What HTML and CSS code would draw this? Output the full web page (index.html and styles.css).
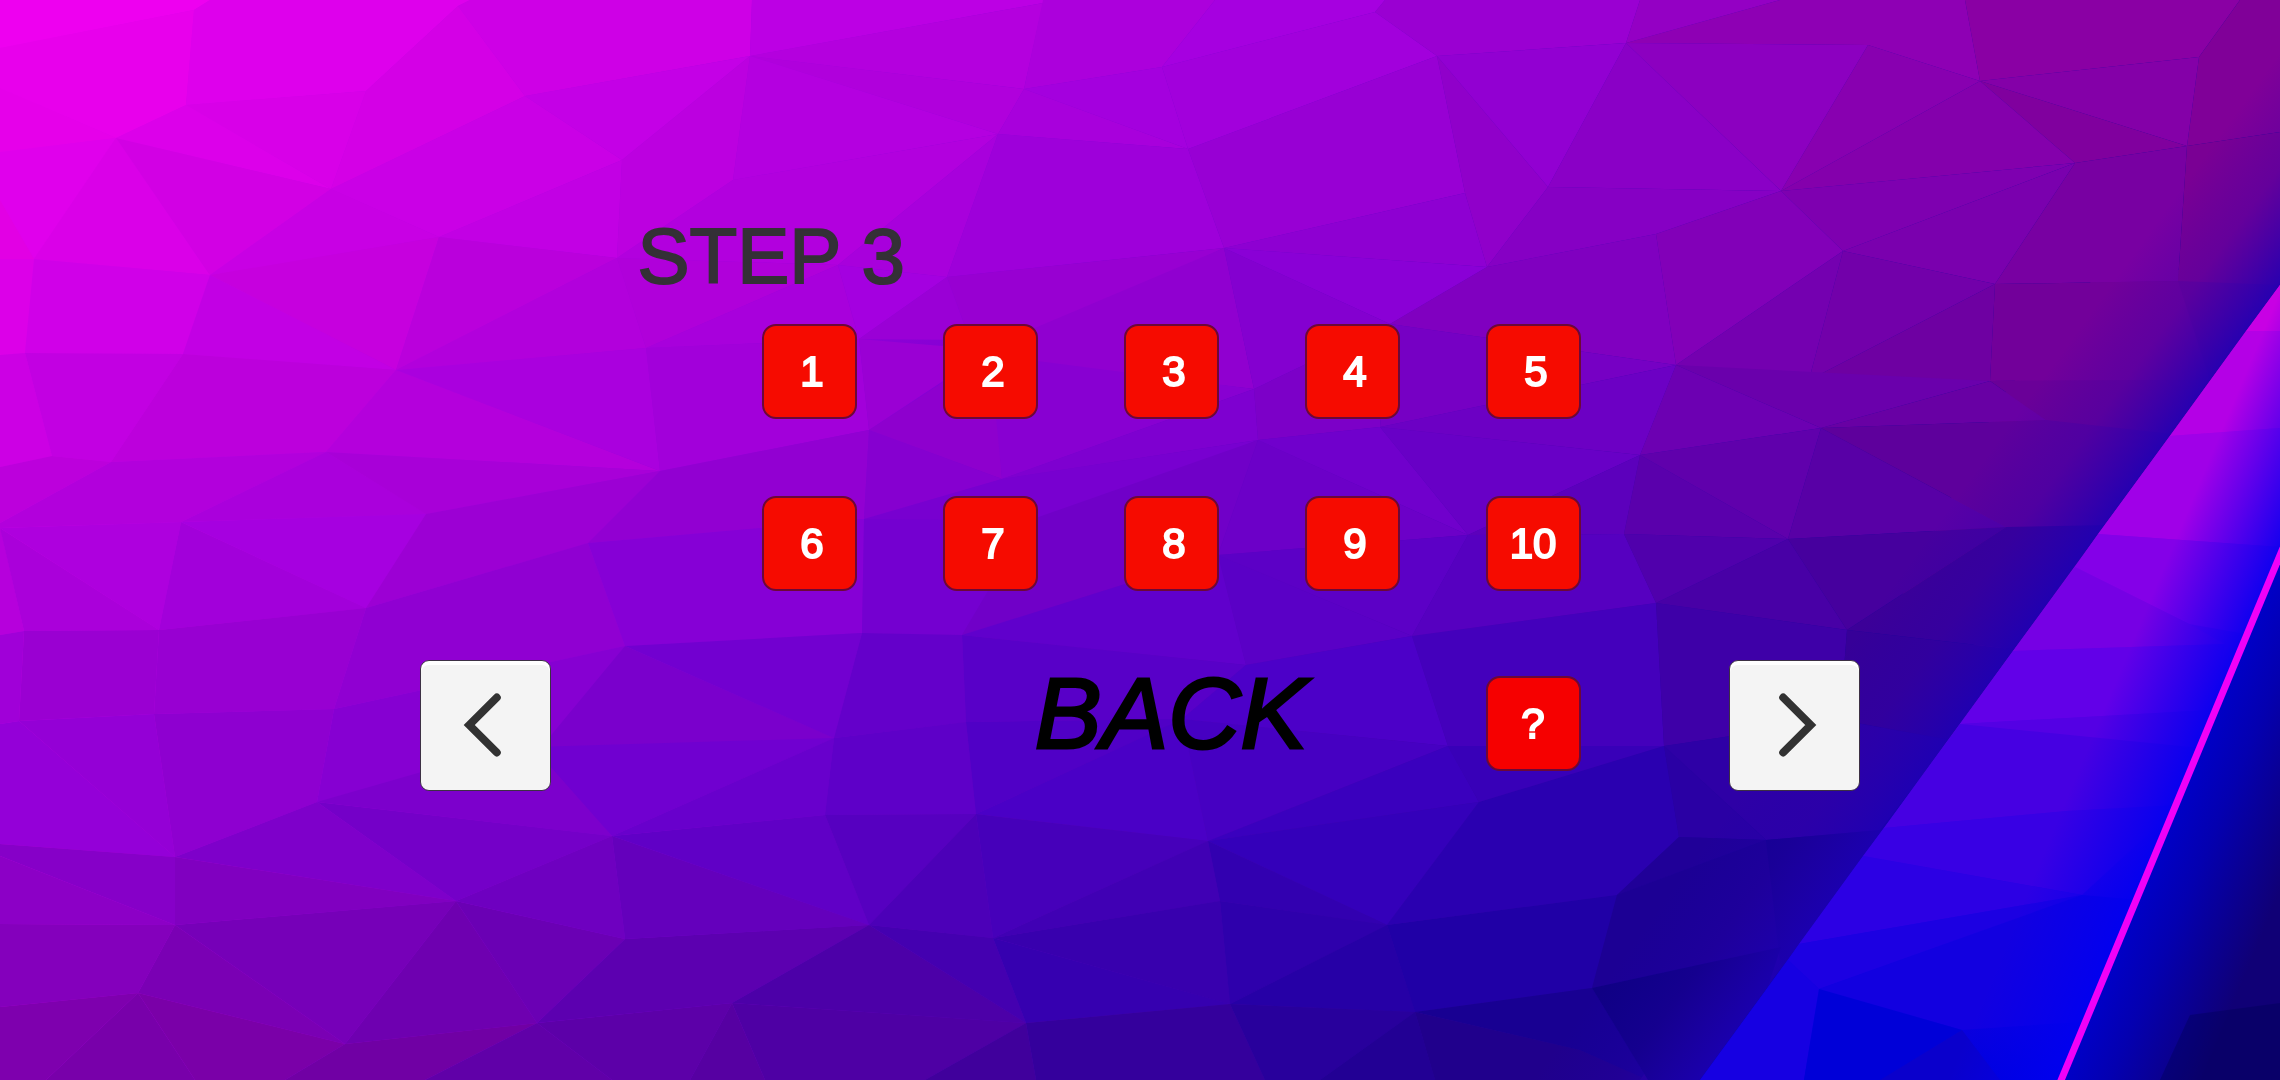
FILE: index.html
```html
<!DOCTYPE html>
<html lang="en">
<head>
    <meta charset="UTF-8">
    <meta name="viewport" content="width=device-width, initial-scale=1.0">
    <title>Step 3</title>
    <link rel="stylesheet" href="styles.css">
</head>
<body>
    <svg class="backdrop" viewBox="0 0 2280 1080" preserveAspectRatio="xMidYMid slice" aria-hidden="true">
        <defs>
            <linearGradient id="base" x1="0" y1="0" x2="1700" y2="1080" gradientUnits="userSpaceOnUse">
                <stop offset="0" stop-color="#ee00f0"/>
                <stop offset="0.5" stop-color="#8400d4"/>
                <stop offset="1" stop-color="#120094"/>
            </linearGradient>
            <linearGradient id="shade" x1="1880" y1="602" x2="1990" y2="682" gradientUnits="userSpaceOnUse">
                <stop offset="0" stop-color="#1400b4" stop-opacity="0"/>
                <stop offset="0.5" stop-color="#2400b0" stop-opacity="0.25"/>
                <stop offset="1" stop-color="#1c00b4" stop-opacity="0.85"/>
            </linearGradient>
            <linearGradient id="ray" x1="0" y1="285" x2="0" y2="1080" gradientUnits="userSpaceOnUse">
                <stop offset="0" stop-color="#c800e4"/>
                <stop offset="0.45" stop-color="#6c00e6"/>
                <stop offset="0.8" stop-color="#1c00e4"/>
                <stop offset="1" stop-color="#0000dc"/>
            </linearGradient>
            <linearGradient id="glow" x1="2075" y1="778" x2="2170" y2="818" gradientUnits="userSpaceOnUse">
                <stop offset="0" stop-color="#0000f0" stop-opacity="0"/>
                <stop offset="1" stop-color="#0000f0" stop-opacity="0.9"/>
            </linearGradient>
            <linearGradient id="night" x1="2170" y1="818" x2="2290" y2="868" gradientUnits="userSpaceOnUse">
                <stop offset="0" stop-color="#0000c8"/>
                <stop offset="0.35" stop-color="#0400b0"/>
                <stop offset="1" stop-color="#100076"/>
            </linearGradient>
        </defs>
        <rect width="2280" height="1080" fill="url(#base)"/>

        <!-- left side -->
        <polygon fill="#ee00f0" points="0,0 210,0 194,10 0,48"/>
        <polygon fill="#e800ec" points="0,48 194,10 186,105 116,138 0,88"/>
        <polygon fill="#e600ea" points="0,88 116,138 0,152"/>
        <polygon fill="#de00ec" points="194,10 210,0 470,0 458,6 366,91 186,105"/>
        <polygon fill="#d800e8" points="186,105 366,91 331,189"/>
        <polygon fill="#dc00ea" points="186,105 331,189 116,138"/>
        <polygon fill="#e000ec" points="0,152 116,138 34,259 0,200"/>
        <polygon fill="#e200e4" points="0,200 34,259 0,259"/>
        <polygon fill="#da00e8" points="116,138 210,275 34,259"/>
        <polygon fill="#d200e4" points="116,138 331,189 210,275"/>
        <polygon fill="#d400e6" points="458,6 525,96 331,189 366,91"/>
        <polygon fill="#ce00e6" points="458,6 470,0 752,0 750,56 525,96"/>
        <polygon fill="#ca00e6" points="331,189 525,96 622,160 439,237"/>
        <polygon fill="#c400e6" points="525,96 750,56 622,160"/>
        <polygon fill="#c800e4" points="331,189 439,237 210,275"/>
        <polygon fill="#c200e4" points="622,160 617,258 439,237"/>
        <polygon fill="#bc00e0" points="622,160 750,56 733,180 617,258"/>
        <polygon fill="#dc00e8" points="0,259 34,259 25,353 0,355"/>
        <polygon fill="#d000e8" points="34,259 210,275 183,354 25,353"/>
        <polygon fill="#c600de" points="210,275 439,237 396,370"/>
        <polygon fill="#c200e4" points="210,275 396,370 183,354"/>
        <polygon fill="#ba00dc" points="439,237 617,258 396,370"/>
        <polygon fill="#b200dc" points="617,258 646,348 396,370"/>
        <polygon fill="#cc00e4" points="0,355 25,353 52,456 0,467"/>
        <polygon fill="#c200e2" points="25,353 183,354 111,462 52,456"/>
        <polygon fill="#bc00dc" points="183,354 396,370 326,452 111,462"/>
        <polygon fill="#b400dc" points="396,370 660,471 326,452"/>
        <polygon fill="#aa00de" points="396,370 646,348 660,471"/>
        <polygon fill="#bc00dc" points="0,467 52,456 111,462 0,523"/>
        <polygon fill="#b200dc" points="0,523 111,462 326,452 181,522 0,528"/>
        <polygon fill="#aa00dc" points="326,452 426,514 181,522"/>
        <polygon fill="#a800d8" points="326,452 660,471 426,514"/>
        <polygon fill="#b600dc" points="0,526 24,631 0,635"/>
        <polygon fill="#aa00da" points="0,528 24,631 159,630"/>
        <polygon fill="#ae00de" points="0,528 181,522 159,630"/>
        <polygon fill="#a200da" points="181,522 366,608 159,630"/>
        <polygon fill="#a600e0" points="181,522 426,514 366,608"/>
        <polygon fill="#9c00d4" points="426,514 660,471 588,543 366,608"/>
        <polygon fill="#a000d8" points="0,635 24,631 19,721 0,724"/>
        <polygon fill="#9a00d2" points="24,631 159,630 154,714 19,721"/>
        <polygon fill="#9800d2" points="159,630 366,608 334,709 154,714"/>
        <polygon fill="#9000d2" points="366,608 588,543 625,646 334,709"/>
        <polygon fill="#9400d8" points="0,724 19,721 175,857 0,844"/>
        <polygon fill="#9400d6" points="19,721 154,714 175,857"/>
        <polygon fill="#8e00d0" points="154,714 334,709 317,802 175,857"/>
        <polygon fill="#8600d2" points="334,709 625,646 540,765 317,802"/>
        <polygon fill="#7c00cc" points="317,802 533,740 612,836"/>
        <polygon fill="#7a00cc" points="625,646 834,738 533,757"/>
        <polygon fill="#7000d0" points="533,747 834,738 612,836"/>
        <polygon fill="#8600c8" points="0,844 175,857 175,925 0,856"/>
        <polygon fill="#8c00c6" points="0,856 175,925 0,924"/>
        <polygon fill="#7e00ca" points="175,857 317,802 456,901"/>
        <polygon fill="#7400c8" points="317,802 612,836 456,901"/>
        <polygon fill="#8000c0" points="175,857 456,901 175,925"/>
        <polygon fill="#8400bc" points="0,924 175,925 138,993 0,1007"/>
        <polygon fill="#7600b8" points="175,925 456,901 345,1044"/>
        <polygon fill="#7a00b4" points="175,925 345,1044 138,993"/>
        <polygon fill="#7e00ae" points="0,1007 138,993 46,1080 0,1080"/>
        <polygon fill="#7800aa" points="138,993 195,1080 46,1080"/>
        <polygon fill="#7a00a8" points="138,993 345,1044 285,1080 195,1080"/>
        <polygon fill="#6e00b0" points="456,901 537,1023 345,1044"/>
        <polygon fill="#6a00b4" points="456,901 625,939 537,1023"/>
        <polygon fill="#6e00c0" points="456,901 612,836 625,939"/>
        <polygon fill="#7000a4" points="345,1044 537,1023 425,1080 285,1080"/>
        <polygon fill="#6000a8" points="537,1023 612,1080 425,1080"/>
        <polygon fill="#5c00a8" points="537,1023 732,1003 690,1080 612,1080"/>
        <polygon fill="#5c00b0" points="537,1023 625,939 869,925 732,1003"/>
        <polygon fill="#6400bc" points="612,836 869,925 625,939"/>
        <polygon fill="#6000c6" points="612,836 825,815 869,925"/>
        <polygon fill="#6800cc" points="612,836 834,738 825,815"/>

        <!-- top middle -->
        <polygon fill="#bc00e4" points="752,0 1043,0 1043,3 750,56"/>
        <polygon fill="#b400de" points="750,56 1043,3 1024,89"/>
        <polygon fill="#b000dc" points="750,56 1024,89 998,134"/>
        <polygon fill="#b400e0" points="750,56 998,134 733,180"/>
        <polygon fill="#ac00dc" points="1043,0 1215,0 1162,67 1024,89"/>
        <polygon fill="#a600e0" points="1215,0 1385,0 1375,12 1162,67"/>
        <polygon fill="#a400de" points="1024,89 1162,67 1188,149"/>
        <polygon fill="#a800dc" points="1024,89 1188,149 998,134"/>
        <polygon fill="#a200dc" points="1162,67 1375,12 1437,56 1188,149"/>
        <polygon fill="#b200de" points="733,180 998,134 838,265 617,258"/>
        <polygon fill="#b000da" points="617,258 838,265 646,348"/>
        <polygon fill="#a800dc" points="998,134 947,277 838,265"/>
        <polygon fill="#a800dc" points="838,265 859,339 646,348"/>
        <polygon fill="#a400e0" points="838,265 947,277 859,339"/>
        <polygon fill="#9e00da" points="998,134 1188,149 1224,248 947,277"/>
        <polygon fill="#9800d4" points="1188,149 1437,56 1465,193 1224,248"/>
        <polygon fill="#9800d2" points="947,277 1224,248 1030,340 970,340"/>
        <polygon fill="#9a00d6" points="947,277 970,340 859,339"/>
        <polygon fill="#a200da" points="646,348 859,339 869,430 660,471"/>
        <polygon fill="#9a00d4" points="859,339 990,350 869,430"/>
        <polygon fill="#9000d0" points="970,340 1030,330 1224,248 1254,389 1002,360"/>
        <polygon fill="#8e00ce" points="869,430 993,350 1002,479"/>
        <polygon fill="#8800d2" points="990,355 1254,389 1002,479"/>
        <polygon fill="#8e00d2" points="1224,248 1465,193 1487,267"/>
        <polygon fill="#8a00d6" points="1224,248 1487,267 1390,324"/>
        <polygon fill="#8400d0" points="1224,248 1390,324 1254,389"/>
        <polygon fill="#9200d2" points="660,471 869,430 864,519 588,543"/>
        <polygon fill="#8600d0" points="869,430 1002,479 864,519"/>
        <polygon fill="#7e00d0" points="1002,479 1254,389 1258,440"/>
        <polygon fill="#7c00c8" points="1254,389 1390,324 1380,427 1258,440"/>
        <polygon fill="#7800d0" points="864,519 1002,479 1258,440 1030,530"/>
        <polygon fill="#8600d6" points="588,543 864,519 862,633 625,646"/>
        <polygon fill="#7400d0" points="864,519 1030,520 962,635 862,633"/>
        <polygon fill="#7000c8" points="1030,520 1258,440 1218,555 962,635"/>
        <polygon fill="#6c00c8" points="1258,440 1468,535 1218,555"/>
        <polygon fill="#7000cc" points="1258,440 1380,427 1468,535"/>
        <polygon fill="#6800c6" points="1380,427 1640,455 1468,535"/>
        <polygon fill="#6000cc" points="962,635 1218,555 1246,665"/>
        <polygon fill="#5a00c6" points="1218,555 1412,636 1246,665"/>
        <polygon fill="#5c00c6" points="1218,555 1468,535 1412,636"/>

        <!-- bottom middle -->
        <polygon fill="#7200d0" points="625,646 862,633 834,738"/>
        <polygon fill="#6400ca" points="862,633 962,635 966,722 834,738"/>
        <polygon fill="#5800c8" points="962,635 1246,665 1182,719 966,722"/>
        <polygon fill="#5e00c8" points="834,738 966,722 976,814 825,815"/>
        <polygon fill="#5000c6" points="966,722 1182,719 976,814"/>
        <polygon fill="#4c00c8" points="1246,665 1412,636 1448,746 1182,719"/>
        <polygon fill="#4a00c6" points="976,814 1182,719 1208,841"/>
        <polygon fill="#4600c2" points="1182,719 1448,746 1208,841"/>
        <polygon fill="#5600c0" points="825,815 976,814 869,925"/>
        <polygon fill="#4c00b8" points="869,925 976,814 993,938"/>
        <polygon fill="#4600ba" points="976,814 1208,841 993,938"/>
        <polygon fill="#4000b4" points="1208,841 1220,901 993,938"/>
        <polygon fill="#3a00be" points="1208,841 1448,746 1479,802"/>
        <polygon fill="#3400ba" points="1208,841 1479,802 1387,925"/>
        <polygon fill="#3200b0" points="1208,841 1387,925 1220,901"/>
        <polygon fill="#4c00a8" points="869,925 1026,1023 732,1003"/>
        <polygon fill="#4400b0" points="869,925 993,938 1026,1023"/>
        <polygon fill="#3800ae" points="993,938 1220,901 1230,1004"/>
        <polygon fill="#3600b0" points="993,938 1230,1004 1026,1023"/>
        <polygon fill="#2e00ac" points="1220,901 1387,925 1230,1004"/>
        <polygon fill="#2600a6" points="1387,925 1415,1012 1230,1004"/>
        <polygon fill="#4e00a4" points="732,1003 1026,1023 925,1080 765,1080"/>
        <polygon fill="#5600a2" points="732,1003 765,1080 690,1080"/>
        <polygon fill="#40009c" points="1026,1023 1036,1080 925,1080"/>
        <polygon fill="#34009c" points="1026,1023 1230,1004 1265,1080 1036,1080"/>
        <polygon fill="#28009c" points="1230,1004 1415,1012 1320,1080 1265,1080"/>
        <polygon fill="#220094" points="1415,1012 1435,1080 1320,1080"/>
        <polygon fill="#2000a6" points="1387,925 1617,895 1592,988 1415,1012"/>
        <polygon fill="#180092" points="1415,1012 1592,988 1648,1080 1580,1050"/>
        <polygon fill="#20008c" points="1415,1012 1580,1050 1648,1080 1435,1080"/>
        <polygon fill="#2a00b0" points="1479,802 1664,746 1679,837 1617,895 1387,925"/>
        <polygon fill="#3800b8" points="1448,746 1664,746 1479,802"/>
        <polygon fill="#4400bc" points="1412,636 1656,603 1664,746 1448,746"/>
        <polygon fill="#5600c0" points="1468,535 1624,534 1656,603 1412,636"/>

        <!-- right side -->
        <polygon fill="#6c0098" points="2100,270 2280,270 2280,285 2097,536 2000,660 1900,600 2000,400"/>
        <polygon fill="#280098" points="2013,645 1700,1080 1640,1080 1900,700"/>
        <polygon fill="#9a00d2" points="1375,12 1385,0 1640,0 1626,43 1437,56"/>
        <polygon fill="#9200d2" points="1437,56 1626,43 1548,187"/>
        <polygon fill="#9000ca" points="1437,56 1548,187 1487,267 1465,193"/>
        <polygon fill="#9400c4" points="1640,0 1780,0 1626,43"/>
        <polygon fill="#8e00b4" points="1780,0 1965,0 1980,81 1868,45 1626,43"/>
        <polygon fill="#8c00c0" points="1626,43 1868,45 1781,191"/>
        <polygon fill="#8a00c6" points="1626,43 1781,191 1548,187"/>
        <polygon fill="#8800b0" points="1868,45 1980,81 1781,191"/>
        <polygon fill="#8a00a4" points="1965,0 2240,0 2199,57 1980,81"/>
        <polygon fill="#800098" points="2240,0 2280,0 2280,132 2187,146 2199,57"/>
        <polygon fill="#8400a8" points="1980,81 2199,57 2187,146"/>
        <polygon fill="#80009e" points="1980,81 2187,146 2075,163"/>
        <polygon fill="#8400ac" points="1980,81 2075,163 1781,191"/>
        <polygon fill="#8600c4" points="1548,187 1781,191 1656,234 1487,267"/>
        <polygon fill="#7e00b0" points="1781,191 2075,163 1843,251"/>
        <polygon fill="#8000c0" points="1487,267 1656,234 1676,365 1390,324"/>
        <polygon fill="#8200b8" points="1656,234 1781,191 1843,251 1676,365"/>
        <polygon fill="#7a00ae" points="1843,251 2075,163 1995,284"/>
        <polygon fill="#7800a2" points="2075,163 2187,146 2178,281 1995,284"/>
        <polygon fill="#7a0094" points="2187,146 2280,132 2280,285 2178,281"/>
        <polygon fill="#7400b0" points="1843,251 1809,380 1676,365"/>
        <polygon fill="#7200aa" points="1843,251 1995,284 1809,380"/>
        <polygon fill="#6e00a2" points="1995,284 1990,381 1809,380"/>
        <polygon fill="#72009a" points="1995,284 2178,281 2210,380 1990,381"/>
        <polygon fill="#7600c4" points="1390,324 1676,365 1380,427"/>
        <polygon fill="#6c00c4" points="1380,427 1676,365 1640,455"/>
        <polygon fill="#6c00b2" points="1676,365 1821,428 1640,455"/>
        <polygon fill="#6a00ac" points="1676,365 1990,381 1821,428"/>
        <polygon fill="#6800a4" points="1990,381 2046,420 1821,428"/>
        <polygon fill="#6a0098" points="1990,381 2210,380 2160,450 2046,420"/>
        <polygon fill="#5c00bc" points="1640,455 1624,534 1468,535"/>
        <polygon fill="#5a00ac" points="1640,455 1788,539 1624,534"/>
        <polygon fill="#6000ac" points="1640,455 1821,428 1788,539"/>
        <polygon fill="#5800a6" points="1821,428 2006,527 1788,539"/>
        <polygon fill="#5e009c" points="1821,428 2046,420 2172,434 2100,532 2006,527"/>
        <polygon fill="#5000ac" points="1624,534 1788,539 1656,603"/>
        <polygon fill="#4800a6" points="1656,603 1788,539 1847,630"/>
        <polygon fill="#46009e" points="1788,539 2006,527 1847,630"/>
        <polygon fill="#3c0098" points="1847,630 2006,527 2110,525 2020,650"/>
        <polygon fill="#3e00a8" points="1656,603 1847,630 1840,720 1664,746"/>
        <polygon fill="#360098" points="1847,630 2020,650 1950,740 1840,720"/>
        <polygon fill="#2e00a6" points="1664,746 1840,720 1950,740 1880,830 1766,840"/>
        <polygon fill="#2a00a4" points="1664,746 1766,840 1679,837"/>
        <polygon fill="#200098" points="1679,837 1766,840 1617,895"/>
        <polygon fill="#1c0094" points="1617,895 1766,840 1781,947 1592,988"/>
        <polygon fill="#160090" points="1766,840 1880,830 1781,970"/>
        <polygon fill="#100084" points="1592,988 1781,947 1760,1010 1700,1080 1648,1080"/>

        <!-- blue edge along the ray -->
        <polygon fill="url(#shade)" points="2280,50 2280,285 1700,1080 1530,1080"/>

        <!-- ray -->
        <polygon fill="url(#ray)" points="2280,285 2280,1080 1700,1080"/>
        <polygon fill="#c800e4" points="2280,285 2280,331 2246,331"/>
        <polygon fill="#b400e6" points="2246,331 2280,331 2280,428 2170,436"/>
        <polygon fill="#a000e8" points="2170,436 2280,428 2280,547 2098,534"/>
        <polygon fill="#8400e8" points="2098,534 2280,547 2280,640 2189,624 2075,567"/>
        <polygon fill="#7600e4" points="2075,567 2189,624 2225,644 2013,651"/>
        <polygon fill="#6200e8" points="2013,651 2225,644 2210,710 1960,724"/>
        <polygon fill="#5400e4" points="1960,724 2210,710 2205,748 2150,750"/>
        <polygon fill="#4600e2" points="1960,724 2200,748 2180,805 2067,811 1884,828"/>
        <polygon fill="#3800e4" points="1884,828 2067,811 2180,805 2082,895 1863,856"/>
        <polygon fill="#2c00e4" points="1863,856 2082,895 1799,944"/>
        <polygon fill="#1c00e2" points="1799,944 2082,895 1819,989 1788,960"/>
        <polygon fill="#1200e0" points="1819,989 2082,895 2140,900 2110,1020 1962,1030"/>
        <polygon fill="#1600e2" points="1788,960 1819,989 1804,1080 1700,1080"/>
        <polygon fill="#0000d8" points="1819,989 1962,1030 1880,1080 1804,1080"/>
        <polygon fill="#0a00cc" points="1962,1030 2000,1080 1880,1080"/>
        <polygon fill="url(#glow)" points="2280,285 2280,560 2061,1080 1940,1080"/>
        <polygon fill="url(#night)" points="2280,555 2280,1080 2061,1080"/>
        <polygon fill="#000058" fill-opacity="0.4" points="2190,1015 2280,1003 2280,1080 2160,1080"/>
        <line x1="2283" y1="548" x2="2057" y2="1090" stroke="#f000f8" stroke-width="7"/>
    </svg>

    <main class="stage">
        <button class="arrow" type="button" aria-label="Previous step">
            <svg class="arrow-icon" viewBox="0 0 131 131"><path d="M77 37 L49 65 L77 93"/></svg>
        </button>

        <section class="panel">
            <h1>STEP 3</h1>
            <div class="levels">
                <button class="level" type="button">1</button>
                <button class="level" type="button">2</button>
                <button class="level" type="button">3</button>
                <button class="level" type="button">4</button>
                <button class="level" type="button">5</button>
                <button class="level" type="button">6</button>
                <button class="level" type="button">7</button>
                <button class="level" type="button">8</button>
                <button class="level" type="button">9</button>
                <button class="level wide" type="button">10</button>
            </div>
            <div class="actions">
                <button class="back" type="button">BACK</button>
                <button class="level help" type="button">?</button>
            </div>
        </section>

        <button class="arrow" type="button" aria-label="Next step">
            <svg class="arrow-icon" viewBox="0 0 131 131"><path d="M54 37 L82 65 L54 93"/></svg>
        </button>
    </main>
</body>
</html>
```

FILE: styles.css
```css
* {
    box-sizing: border-box;
}

body {
    margin: 0;
    min-height: 100vh;
    font-family: "Liberation Sans", Arial, sans-serif;
    background-color: #6000c0;
}

button {
    padding: 0;
    font-family: inherit;
    cursor: pointer;
}

.backdrop {
    position: fixed;
    top: 0;
    left: 0;
    width: 100%;
    height: 100%;
    z-index: -1;
}

.stage {
    display: flex;
    align-items: flex-end;
    justify-content: space-between;
    max-width: 1440px;
    margin: 0 auto;
    padding-top: 210px;
}

.panel {
    padding: 0 0 20px 62px;
}

h1 {
    margin: 0 0 22px -124px;
    font-size: 78px;
    line-height: 92px;
    font-weight: normal;
    color: #343036;
    -webkit-text-stroke: 2px #343036;
}

/* number buttons and the bottom row share the same five columns */
.levels,
.actions {
    display: grid;
    grid-template-columns: repeat(5, 95px);
    gap: 77px 86px;
}

.actions {
    margin-top: 85px;
}

.level {
    height: 95px;
    padding-left: 6px;
    border: 2px solid #6c0838;
    border-radius: 14px;
    background-color: #f60b00;
    color: white;
    font-size: 42px;
    -webkit-text-stroke: 2px white;
}

.level.wide {
    padding-left: 0;
}

.level.help {
    grid-column: 5;
    padding-left: 0;
    background-color: #f60000;
}

.back {
    grid-column: 2 / 5;
    align-self: start;
    border: none;
    background: none;
    color: black;
    font-size: 100px;
    line-height: 74px;
    font-style: italic;
    -webkit-text-stroke: 3px black;
}

.arrow {
    flex: none;
    width: 131px;
    height: 131px;
    border: 1px solid #3c3044;
    border-radius: 9px;
    background-color: #f4f4f4;
    box-shadow: inset 0 4px 0 white;
}

.arrow-icon {
    display: block;
    width: 100%;
    height: 100%;
    fill: none;
    stroke: #323232;
    stroke-width: 8;
    stroke-linecap: round;
}

.level:hover,
.arrow:hover {
    filter: brightness(0.94);
}
```
